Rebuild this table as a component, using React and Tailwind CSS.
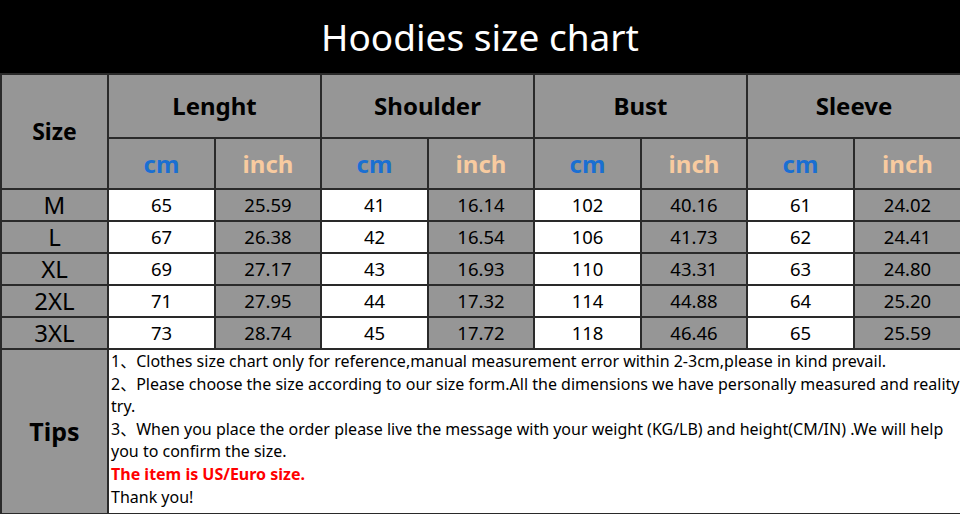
import React from 'react';

const rows = [
  ['M', '65', '25.59', '41', '16.14', '102', '40.16', '61', '24.02'],
  ['L', '67', '26.38', '42', '16.54', '106', '41.73', '62', '24.41'],
  ['XL', '69', '27.17', '43', '16.93', '110', '43.31', '63', '24.80'],
  ['2XL', '71', '27.95', '44', '17.32', '114', '44.88', '64', '25.20'],
  ['3XL', '73', '28.74', '45', '17.72', '118', '46.46', '65', '25.59'],
];

const groups = ['Lenght', 'Shoulder', 'Bust', 'Sleeve'];

const font = { fontFamily: '"Noto Sans", "Noto Sans CJK SC", sans-serif' };

export default function App() {
  return (
    <div className="w-[960px] h-[514px] bg-white overflow-hidden" style={font}>
      {/* Title */}
      <div className="h-[73px] bg-black flex items-center justify-center">
        <h1 className="text-white text-[37px] leading-none">Hoodies size chart</h1>
      </div>

      <table className="table-fixed border-collapse w-[960px] text-black">
        <colgroup>
          <col className="w-[107px]" />
          <col className="w-[107px]" />
          <col className="w-[106px]" />
          <col className="w-[107px]" />
          <col className="w-[106px]" />
          <col className="w-[107px]" />
          <col className="w-[106px]" />
          <col className="w-[107px]" />
          <col className="w-[107px]" />
        </colgroup>
        <tbody>
          <tr className="h-[64px]">
            <td rowSpan={2} className="border-2 border-[#2a2a2a] bg-[#969696] text-center font-bold text-[23px]">
              Size
            </td>
            {groups.map((g) => (
              <td key={g} colSpan={2} className="border-2 border-[#2a2a2a] bg-[#969696] text-center font-bold text-[24px]">
                {g}
              </td>
            ))}
          </tr>
          <tr className="h-[51px]">
            {groups.map((g) => (
              <React.Fragment key={g}>
                <td className="border-2 border-[#2a2a2a] bg-[#969696] text-center font-bold text-[24px] text-[#1a6fd2]">cm</td>
                <td className="border-2 border-[#2a2a2a] bg-[#969696] text-center font-bold text-[24px] text-[#f8cba0]">inch</td>
              </React.Fragment>
            ))}
          </tr>
          {rows.map((r) => (
            <tr key={r[0]} className="h-[32px]">
              {r.map((v, i) => (
                <td
                  key={i}
                  className={
                    'border-2 border-[#2a2a2a] text-center leading-none ' +
                    (i === 0 ? 'text-[24px] ' : 'text-[18.5px] ') +
                    (i > 0 && i % 2 === 1 ? 'bg-white' : 'bg-[#969696]')
                  }
                >
                  {v}
                </td>
              ))}
            </tr>
          ))}
          <tr className="h-[165px]">
            <td className="border-2 border-[#2a2a2a] bg-[#969696] text-center font-bold text-[25px]">Tips</td>
            <td colSpan={8} className="border-2 border-[#2a2a2a] bg-white align-top pl-[2px] pr-0 text-[16px] leading-[22.6px]">
              <p>1、Clothes size chart only for reference,manual measurement error within 2-3cm,please in kind prevail.</p>
              <p>2、Please choose the size according to our size form.All the dimensions we have personally measured and reality try.</p>
              <p>3、When you place the order please live the message with your weight (KG/LB) and height(CM/IN) .We will help you to confirm the size.</p>
              <p className="text-[#ff0000] font-bold">The item is US/Euro size.</p>
              <p>Thank you!</p>
            </td>
          </tr>
        </tbody>
      </table>
    </div>
  );
}
